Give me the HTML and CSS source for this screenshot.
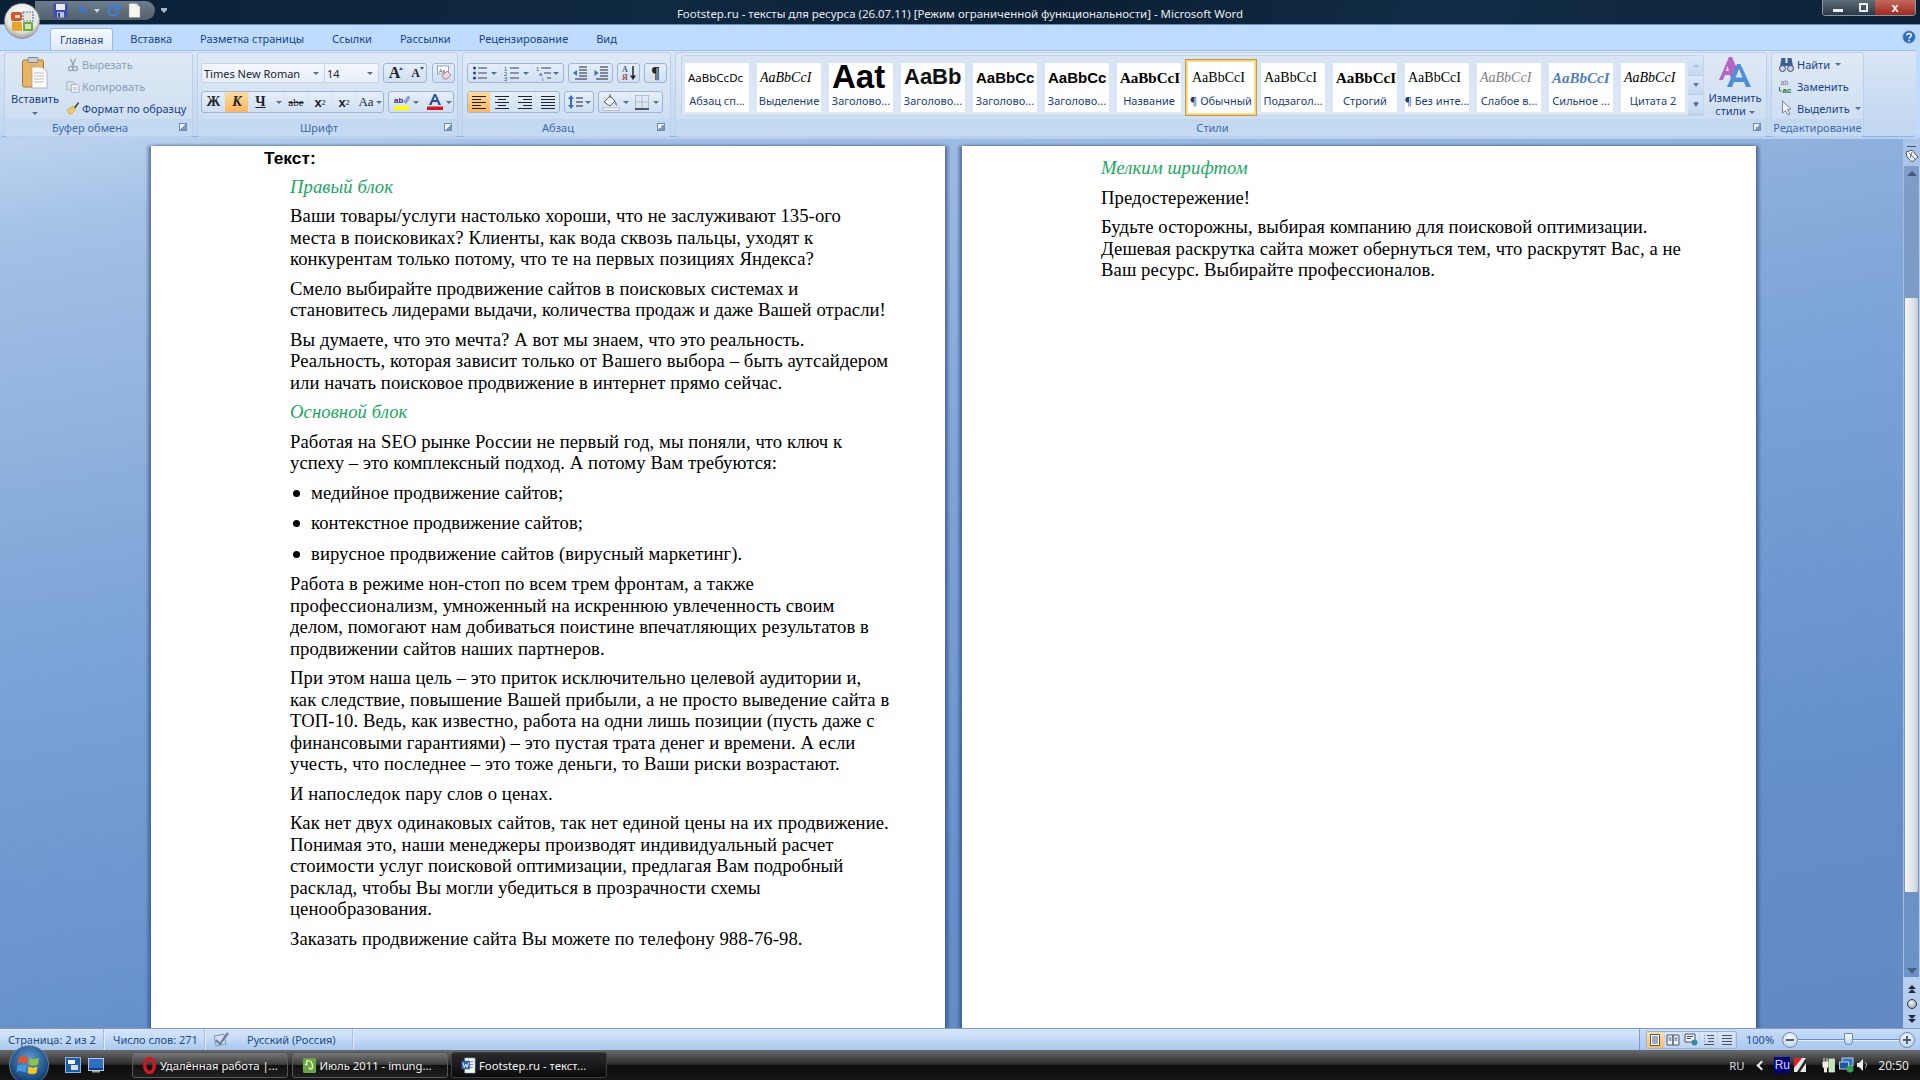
FILE: index.html
```html
<!DOCTYPE html>
<html lang="ru">
<head>
<meta charset="utf-8">
<title>Footstep.ru - Microsoft Word</title>
<link rel="stylesheet" href="styles.css">
</head>
<body>
<div class="app">
  <header class="titlebar">
    <div class="tb-left">
      <div class="qat">
        <svg class="q-ic" viewBox="0 0 15 15"><rect x="0.5" y="0.5" width="14" height="14" rx="1" fill="#3d4cb0"/><rect x="3" y="1" width="9" height="6" fill="#e8ecf8"/><rect x="4" y="9" width="7" height="5.5" fill="#b8c0dc"/><rect x="5" y="10" width="2" height="4" fill="#34408f"/></svg>
        <svg class="q-ic q-undo" viewBox="0 0 15 15"><path d="M2 6 L7 2 V5 C12 5 14 8 12 12 C11.5 9 9.500 8 7 8 V10.500 Z" fill="#3f73c8"/></svg>
        <span class="q-drop"></span>
        <svg class="q-ic q-redo" viewBox="0 0 15 15"><path d="M11 3 A6 6 0 1 0 13 8 L10.500 8 A3.500 3.500 0 1 1 9 5 L7.500 7 L14 7 L13.500 1 Z" fill="#3f7fd0"/></svg>
        <svg class="q-ic q-new" viewBox="0 0 13 15"><path d="M1 0.500 H8.500 L12 4 V14.500 H1 Z" fill="#f6f6f0" stroke="#8a8a80" stroke-width="0.500"/><path d="M8.500 0.500 V4 H12" fill="#d8d8cc"/></svg>
      </div>
      <span class="q-more"></span>
    </div>
    <div class="tb-title">Footstep.ru - тексты для ресурса (26.07.11) [Режим ограниченной функциональности] - Microsoft Word</div>
    <div class="tb-right">
      <div class="winctl">
        <span class="wc wc-min"><i></i></span>
        <span class="wc wc-max"><i></i></span>
        <span class="wc wc-close">x</span>
      </div>
    </div>
  </header>

  <div class="office-btn">
    <svg viewBox="0 0 36 36" width="36" height="36">
      <defs><radialGradient id="ob" cx="50%" cy="35%" r="65%"><stop offset="0" stop-color="#ffffff"/><stop offset="0.7" stop-color="#e4e6e2"/><stop offset="1" stop-color="#9a9c94"/></radialGradient></defs>
      <circle cx="18" cy="18" r="17.500" fill="url(#ob)" stroke="#7f8a94" stroke-width="0.600"/>
      <rect x="7" y="9" width="11" height="9" rx="2" fill="#d8562a"/>
      <rect x="19" y="9" width="10" height="9" fill="#e8e4d8" stroke="#4e7cb8" stroke-width="1.200" stroke-dasharray="2 1"/>
      <rect x="8" y="19" width="10" height="9" rx="1" fill="#e9a42a"/>
      <rect x="19" y="19" width="10" height="9" rx="1" fill="#6cab3c"/>
      <rect x="11" y="12" width="5" height="3" fill="#f6d9c6"/>
      <rect x="21" y="21" width="6" height="5" fill="#cfe6b4"/>
    </svg>
  </div>

  <nav class="tabs">
    <span class="tab tab-active">Главная</span>
    <span class="tab">Вставка</span>
    <span class="tab">Разметка страницы</span>
    <span class="tab">Ссылки</span>
    <span class="tab">Рассылки</span>
    <span class="tab">Рецензирование</span>
    <span class="tab">Вид</span>
    <svg class="help" viewBox="0 0 14 14"><circle cx="7" cy="7" r="6.500" fill="#2f6fc0" stroke="#a9c4e4"/><path d="M4.800 5.400 C5 3 9.400 3 9.300 5.500 C9.200 7 7.200 7 7.100 8.700" fill="none" stroke="#fff" stroke-width="1.500"/><circle cx="7.100" cy="10.600" r="0.900" fill="#fff"/></svg>
  </nav>

  <section class="ribbon">
    <div class="ribbon-panel">
      <!-- clipboard -->
      <div class="group g-clip">
        <div class="gbody clip-body">
          <div class="paste">
            <svg class="paste-ic" viewBox="0 0 26 32"><rect x="0.500" y="3" width="21" height="27" rx="1.500" fill="#e7b561" stroke="#a8762f"/><rect x="6" y="0.500" width="10" height="5" rx="1" fill="#c9cdd2" stroke="#7e858e"/><path d="M10 10 H20 L25 15 V31 H10 Z" fill="#fbfbf8" stroke="#9aa0a8" stroke-width="0.700"/><path d="M12 16 H22 M12 19 H22 M12 22 H22 M12 25 H22" stroke="#b8bec8"/></svg>
            <span class="paste-label">Вставить</span>
            <span class="drop drop-paste"></span>
          </div>
          <div class="smalls">
            <div class="small disabled">
              <svg class="sic" viewBox="0 0 14 16"><path d="M4 1 L8 9 M10 1 L6 9" stroke="#9aa4b0" stroke-width="1.500"/><circle cx="4.500" cy="12" r="2.500" fill="none" stroke="#9aa4b0" stroke-width="1.500"/><circle cx="9.500" cy="12" r="2.500" fill="none" stroke="#9aa4b0" stroke-width="1.500"/></svg>
              <span>Вырезать</span>
            </div>
            <div class="small disabled">
              <svg class="sic" viewBox="0 0 16 14"><path d="M1 1 H8 L10 3 V10 H1 Z" fill="#dfe6ee" stroke="#a3adb9"/><path d="M6 4 H13 L15 6 V13 H6 Z" fill="#eef2f6" stroke="#a3adb9"/><path d="M8 8 H13 M8 10 H13" stroke="#b4bdc8"/></svg>
              <span>Копировать</span>
            </div>
            <div class="small">
              <svg class="sic" viewBox="0 0 16 16"><path d="M9 7 L14 1 L15 2.500 L10.500 8.500 Z" fill="#3c3f4a"/><path d="M2 10 L8 6 L11 9.500 L6 15 C4 15 1.500 13 2 10 Z" fill="#f3cf58" stroke="#b08d2c" stroke-width="0.600"/></svg>
              <span>Формат по образцу</span>
            </div>
          </div>
        </div>
        <div class="glabel has-launch">Буфер обмена<span class="launch"></span></div>
      </div>

      <!-- font -->
      <div class="group g-font">
        <div class="gbody rows">
          <div class="row">
            <div class="combo combo-font"><span>Times New Roman</span><span class="drop"></span></div>
            <div class="combo combo-size"><span>14</span><span class="drop"></span></div>
            <div class="box box-grow">
              <span class="cell c22 grow-a grow-big">A<em class="tri-up"></em></span>
              <span class="cell c22 grow-a grow-small">A<em class="tri-down"></em></span>
            </div>
            <div class="box box-clear">
              <svg class="ic16" viewBox="0 0 16 16"><rect x="1.500" y="1" width="11" height="8" fill="#fff" stroke="#6d7f99" stroke-width="0.700"/><text x="3" y="7.500" class="tiny">Aa</text><path d="M6 11 L11 6 L15 10 L11 14 H8 Z" fill="#f3d0d8" stroke="#8b6f7a" stroke-width="0.700"/></svg>
            </div>
          </div>
          <div class="row">
            <div class="box box-fmt">
              <span class="cell w23 fmt-b">Ж</span>
              <span class="cell w24 fmt-i active">К</span>
              <span class="cell w23 fmt-u">Ч</span>
              <span class="cell w12"><span class="drop"></span></span>
              <span class="cell w24 fmt-s">abe</span>
              <span class="cell w24 fmt-x">x<sub>2</sub></span>
              <span class="cell w24 fmt-x">x<sup>2</sup></span>
              <span class="cell w28 fmt-aa">Aa<span class="drop"></span></span>
            </div>
            <div class="box box-color">
              <span class="cell w34">
                <svg class="ic18" viewBox="0 0 18 18"><rect x="1" y="13" width="15" height="4" fill="#ffff00"/><text x="1" y="10" class="tinyb">ab</text><path d="M11 9 L15 3 L17 4.500 L13 10.500 Z" fill="#8fa8d8" stroke="#5b6e94" stroke-width="0.500"/></svg>
                <span class="drop"></span>
              </span>
              <span class="cell w32">
                <svg class="ic18" viewBox="0 0 18 18"><path d="M3 12 L8 1 H10 L15 12 H12.500 L11.300 9 H6.700 L5.500 12 Z M7.500 7 H10.500 L9 3.300 Z" fill="#2c4f9a" fill-rule="evenodd"/><rect x="1" y="13.500" width="16" height="3.500" fill="#e0121c"/></svg>
                <span class="drop"></span>
              </span>
            </div>
          </div>
        </div>
        <div class="glabel has-launch">Шрифт<span class="launch"></span></div>
      </div>

      <!-- paragraph -->
      <div class="group g-para">
        <div class="gbody rows">
          <div class="row row-para">
            <div class="box">
              <span class="cell w32"><svg class="ic16" viewBox="0 0 16 16"><circle cx="2.500" cy="3" r="1.500" fill="#26497f"/><circle cx="2.500" cy="8" r="1.500" fill="#26497f"/><circle cx="2.500" cy="13" r="1.500" fill="#26497f"/><path d="M6 3 H15 M6 8 H15 M6 13 H15" stroke="#3c4350"/></svg><span class="drop"></span></span>
              <span class="cell w32"><svg class="ic16" viewBox="0 0 16 16"><text x="0" y="5.500" class="tinyn">1</text><text x="0" y="10.500" class="tinyn">2</text><text x="0" y="15.500" class="tinyn">3</text><path d="M6 3 H15 M6 8 H15 M6 13 H15" stroke="#3c4350"/></svg><span class="drop"></span></span>
              <span class="cell w31"><svg class="ic16" viewBox="0 0 16 16"><text x="0" y="5.500" class="tinyn">1</text><text x="3" y="10.500" class="tinyn">a</text><text x="6" y="15.500" class="tinyn">i</text><path d="M5 3 H15 M8 8 H15 M11 13 H15" stroke="#3c4350"/></svg><span class="drop drop-tight"></span></span>
            </div>
            <div class="box">
              <span class="cell w215"><svg class="ic16" viewBox="0 0 16 16"><path d="M7 2 H15 M7 5 H15 M7 8 H15 M7 11 H15 M3 14 H15" stroke="#23272f"/><path d="M1 8 L5 5 V11 Z" fill="#3a70b8"/></svg></span>
              <span class="cell w215"><svg class="ic16" viewBox="0 0 16 16"><path d="M7 2 H15 M7 5 H15 M7 8 H15 M7 11 H15 M3 14 H15" stroke="#23272f"/><path d="M5.500 8 L1.500 5 V11 Z" fill="#3a70b8"/></svg></span>
            </div>
            <div class="box box-single">
              <svg class="ic16" viewBox="0 0 16 16"><text x="1" y="7" class="sort-a">А</text><text x="1" y="15" class="sort-b">Я</text><path d="M12 1 V13" stroke="#20242c" stroke-width="1.500"/><path d="M9 10.500 L12 15 L15 10.500 Z" fill="#20242c"/></svg>
            </div>
            <div class="box box-single pil">¶</div>
          </div>
          <div class="row row-para">
            <div class="box box-align">
              <span class="cell w225 active"><svg class="ic16" viewBox="0 0 16 16"><path d="M1 2.500 H15 M1 5.500 H10 M1 8.500 H15 M1 11.500 H10 M1 14.500 H15" stroke="#20242c"/></svg></span>
              <span class="cell w225"><svg class="ic16" viewBox="0 0 16 16"><path d="M1 2.500 H15 M4 5.500 H12 M1 8.500 H15 M4 11.500 H12 M1 14.500 H15" stroke="#20242c"/></svg></span>
              <span class="cell w225"><svg class="ic16" viewBox="0 0 16 16"><path d="M1 2.500 H15 M6 5.500 H15 M1 8.500 H15 M6 11.500 H15 M1 14.500 H15" stroke="#20242c"/></svg></span>
              <span class="cell w225"><svg class="ic16" viewBox="0 0 16 16"><path d="M1 2.500 H15 M1 5.500 H15 M1 8.500 H15 M1 11.500 H15 M1 14.500 H15" stroke="#20242c"/></svg></span>
            </div>
            <div class="box">
              <span class="cell w28"><svg class="ic16" viewBox="0 0 16 16"><path d="M3 1 L6 5 H4 V11 H6 L3 15 L0 11 H2 V5 H0 Z" fill="#3a70b8"/><path d="M8 4 H15 M8 8 H15 M8 12 H15" stroke="#23272f"/></svg><span class="drop drop-tight"></span></span>
            </div>
            <div class="box">
              <span class="cell w32"><svg class="ic18" viewBox="0 0 18 18"><path d="M2 9 L8 3 L13 8 L8 13 Z" fill="#f4f4ee" stroke="#59606c"/><path d="M13 8 C15 10 15 12 14.500 13 C13.500 12 13 10 13 8 Z" fill="#3c70b6"/><path d="M8 1 V5" stroke="#59606c"/><rect x="1" y="15" width="16" height="2.500" fill="#fff" stroke="#7f8793" stroke-width="0.500"/></svg><span class="drop"></span></span>
              <span class="cell w31"><svg class="ic16" viewBox="0 0 16 16"><path d="M1.500 1.500 H14.500 V14.500 M1.500 1.500 V14.500 M8 1.500 V14.500 M1.500 8 H14.500" stroke="#8f97a4" stroke-dasharray="1 1" fill="none"/><path d="M1 15 H15" stroke="#23272f" stroke-width="1.500"/></svg><span class="drop"></span></span>
            </div>
          </div>
        </div>
        <div class="glabel has-launch">Абзац<span class="launch"></span></div>
      </div>

      <!-- styles -->
      <div class="group g-styles">
        <div class="gbody styles-body">
          <div class="gallery">
            <div class="sitem"><span class="sample s-cal">AaBbCcDc</span><span class="sname">Абзац сп...</span></div>
            <div class="sitem"><span class="sample s-em">AaBbCcI</span><span class="sname">Выделение</span></div>
            <div class="sitem"><span class="sample s-h1">Aat</span><span class="sname">Заголово...</span></div>
            <div class="sitem"><span class="sample s-h2">AaBb</span><span class="sname">Заголово...</span></div>
            <div class="sitem"><span class="sample s-h3">AaBbCc</span><span class="sname">Заголово...</span></div>
            <div class="sitem"><span class="sample s-h4">AaBbCc</span><span class="sname">Заголово...</span></div>
            <div class="sitem"><span class="sample s-tt">AaBbCcI</span><span class="sname">Название</span></div>
            <div class="sitem selected"><span class="sample s-tm">AaBbCcI</span><span class="sname">¶ Обычный</span></div>
            <div class="sitem"><span class="sample s-tm">AaBbCcI</span><span class="sname">Подзагол...</span></div>
            <div class="sitem"><span class="sample s-strong">AaBbCcI</span><span class="sname">Строгий</span></div>
            <div class="sitem"><span class="sample s-tm">AaBbCcI</span><span class="sname">¶ Без инте...</span></div>
            <div class="sitem"><span class="sample s-weak">AaBbCcI</span><span class="sname">Слабое в...</span></div>
            <div class="sitem"><span class="sample s-strongem">AaBbCcI</span><span class="sname">Сильное ...</span></div>
            <div class="sitem"><span class="sample s-em">AaBbCcI</span><span class="sname">Цитата 2</span></div>
            <div class="gscroll">
              <span class="gs gs-up"><i></i></span>
              <span class="gs gs-down"><i></i></span>
              <span class="gs gs-more"><i></i></span>
            </div>
          </div>
          <div class="change">
            <svg class="change-ic" viewBox="0 0 34 32"><path d="M1 24 L11 1 H14 L20 15 L16 24 H13.500 L11.700 19 H7 L5 24 Z M8 15 H11 L9.500 10 Z" fill="#b565c4" fill-rule="evenodd"/><path d="M9 31 L19 8 H22.500 L33 31 H28 L26 26 H16 L14 31 Z M17.500 21.500 H24.500 L21 13 Z" fill="#4f8fd8" fill-rule="evenodd"/></svg>
            <span class="change-t">Изменить</span>
            <span class="change-t">стили <span class="drop"></span></span>
          </div>
        </div>
        <div class="glabel has-launch">Стили<span class="launch"></span></div>
      </div>

      <!-- editing -->
      <div class="group g-edit">
        <div class="gbody">
          <div class="smalls edit-smalls">
            <div class="small">
              <svg class="eic" viewBox="0 0 16 16"><path d="M3 2 H7 V7 H9 V2 H13 L15 13 H9.500 V10 H6.500 V13 H1 Z" fill="#3d5f94"/><circle cx="4" cy="12.500" r="3" fill="#c9d6ea" stroke="#2d4a78"/><circle cx="12" cy="12.500" r="3" fill="#c9d6ea" stroke="#2d4a78"/></svg>
              <span>Найти</span><span class="drop"></span>
            </div>
            <div class="small">
              <svg class="eic" viewBox="0 0 16 16"><text x="2" y="7" class="rep-a">ab</text><text x="4" y="15" class="rep-b">ac</text><path d="M1 9 V13 H3" stroke="#2a62b0" fill="none"/></svg>
              <span>Заменить</span>
            </div>
            <div class="small">
              <svg class="eic" viewBox="0 0 16 16"><path d="M4 1 L4 13 L7 10.500 L9.500 15 L11.500 14 L9 9.500 L12.500 9 Z" fill="#f6f8fc" stroke="#586a86" stroke-width="0.800"/></svg>
              <span>Выделить</span><span class="drop"></span>
            </div>
          </div>
        </div>
        <div class="glabel">Редактирование</div>
      </div>
    </div>
  </section>

  <main class="doc">
    <div class="pages">
      <article class="page page-left">
        <p class="heading">Текст:</p>
        <div class="content">
          <p class="green">Правый блок</p>
          <p>Ваши товары/услуги настолько хороши, что не заслуживают 135-ого<br>места в поисковиках? Клиенты, как вода сквозь пальцы, уходят к<br>конкурентам только потому, что те на первых позициях Яндекса?</p>
          <p>Смело выбирайте продвижение сайтов в поисковых системах и<br>становитесь лидерами выдачи, количества продаж и даже Вашей отрасли!</p>
          <p>Вы думаете, что это мечта? А вот мы знаем, что это реальность.<br>Реальность, которая зависит только от Вашего выбора – быть аутсайдером<br>или начать поисковое продвижение в интернет прямо сейчас.</p>
          <p class="green">Основной блок</p>
          <p>Работая на SEO рынке России не первый год, мы поняли, что ключ к<br>успеху – это комплексный подход. А потому Вам требуются:</p>
          <ul>
            <li>медийное продвижение сайтов;</li>
            <li>контекстное продвижение сайтов;</li>
            <li>вирусное продвижение сайтов (вирусный маркетинг).</li>
          </ul>
          <p>Работа в режиме нон-стоп по всем трем фронтам, а также<br>профессионализм, умноженный на искреннюю увлеченность своим<br>делом, помогают нам добиваться поистине впечатляющих результатов в<br>продвижении сайтов наших партнеров.</p>
          <p>При этом наша цель – это приток исключительно целевой аудитории и,<br>как следствие, повышение Вашей прибыли, а не просто выведение сайта в<br>ТОП-10. Ведь, как известно, работа на одни лишь позиции (пусть даже с<br>финансовыми гарантиями) – это пустая трата денег и времени. А если<br>учесть, что последнее – это тоже деньги, то Ваши риски возрастают.</p>
          <p>И напоследок пару слов о ценах.</p>
          <p>Как нет двух одинаковых сайтов, так нет единой цены на их продвижение.<br>Понимая это, наши менеджеры производят индивидуальный расчет<br>стоимости услуг поисковой оптимизации, предлагая Вам подробный<br>расклад, чтобы Вы могли убедиться в прозрачности схемы<br>ценообразования.</p>
          <p>Заказать продвижение сайта Вы можете по телефону 988-76-98.</p>
        </div>
      </article>
      <article class="page page-right">
        <div class="content">
          <p class="green">Мелким шрифтом</p>
          <p>Предостережение!</p>
          <p>Будьте осторожны, выбирая компанию для поисковой оптимизации.<br>Дешевая раскрутка сайта может обернуться тем, что раскрутят Вас, а не<br>Ваш ресурс. Выбирайте профессионалов.</p>
        </div>
      </article>
    </div>
    <aside class="vscroll">
      <div class="v-ruler">
        <span class="v-dash"></span>
        <svg class="v-rul" viewBox="0 0 14 14"><path d="M1 3 L7 1 L13 8 L7 13 L2 8 Z" fill="#eef2f8" stroke="#4e5a6c"/><path d="M4 4 L10 10 M7 3 L5 9" stroke="#6b7789"/></svg>
      </div>
      <div class="v-track">
        <span class="v-arrow v-arrow-up"></span>
        <div class="v-thumb"></div>
        <span class="v-arrow v-arrow-down"></span>
      </div>
      <div class="v-browse">
        <svg class="v-b" viewBox="0 0 10 10"><path d="M5 1 L9 5 H1 Z M5 5 L9 9 H1 Z" fill="#1e2a40"/></svg>
        <span class="v-ball"></span>
        <svg class="v-b" viewBox="0 0 10 10"><path d="M1 1 H9 L5 5 Z M1 5 H9 L5 9 Z" fill="#1e2a40"/></svg>
      </div>
    </aside>
  </main>

  <footer class="status">
    <span class="st st1">Страница: 2 из 2</span>
    <span class="st st2">Число слов: 271</span>
    <span class="st st3"><svg viewBox="0 0 18 16" width="18" height="16"><path d="M2 3 H12 V13 H2 Z" fill="#d4e0f0" stroke="#8296b4" transform="rotate(-12 7 8)"/><path d="M3 8 L7 12 L15 1" fill="none" stroke="#6c7f9c" stroke-width="2.200"/></svg></span>
    <span class="st st4">Русский (Россия)</span>
    <div class="st-right">
      <div class="views">
        <span class="view active"><svg viewBox="0 0 12 12" width="12" height="12"><path d="M1.500 0.500 H10.500 V11.500 H1.500 Z" fill="#fff" stroke="#4a5568"/><path d="M3 3 H9 M3 5 H9 M3 7 H9 M3 9 H9" stroke="#4a5568"/></svg></span>
        <span class="view"><svg viewBox="0 0 14 12" width="14" height="12"><path d="M1 1 H7 V11 H1 Z M7 1 H13 V11 H7 Z" fill="#eef3fa" stroke="#4a5568"/><path d="M2.500 4 H5.500 M2.500 6 H5.500 M8.500 4 H11.500 M8.500 6 H11.500" stroke="#4a5568"/></svg></span>
        <span class="view"><svg viewBox="0 0 14 13" width="14" height="13"><path d="M1 1 H11 V9 H1 Z" fill="#eef3fa" stroke="#4a5568"/><path d="M3 3.500 H9 M3 5.500 H7" stroke="#4a5568"/><circle cx="10.500" cy="9.500" r="3" fill="#2f8f9a"/></svg></span>
        <span class="view"><svg viewBox="0 0 12 12" width="12" height="12"><path d="M4 1.500 H11 M5 4.500 H11 M5 7.500 H11 M1 10.500 H11" stroke="#4a5568"/><path d="M1 1.500 H2 M1 4.500 H2 M1 7.500 H2" stroke="#7a8698"/></svg></span>
        <span class="view"><svg viewBox="0 0 12 12" width="12" height="12"><path d="M1 1.500 H11 M1 4.500 H11 M1 7.500 H11 M1 10.500 H11" stroke="#4a5568"/></svg></span>
      </div>
      <span class="zoom-pct">100%</span>
      <span class="zbtn"><i></i></span>
      <div class="zslider"><span class="zthumb"></span></div>
      <span class="zbtn zplus"><i></i><b></b></span>
    </div>
  </footer>

  <footer class="taskbar">
    <div class="orb">
      <svg viewBox="0 0 40 40" width="40" height="40">
        <defs><radialGradient id="og" cx="50%" cy="35%" r="70%"><stop offset="0" stop-color="#5f9ed8"/><stop offset="0.7" stop-color="#1d4f86"/><stop offset="1" stop-color="#0c2744"/></radialGradient></defs>
        <circle cx="20" cy="20" r="19.500" fill="url(#og)" stroke="#8d9aa6" stroke-width="0.700"/>
        <path d="M10 12 C13 10 16 11 19 12.500 L18 19 C15 17.500 12 17 9 18.500 Z" fill="#e8542a"/>
        <path d="M21 13 C24 14.500 27 14.500 30 13 L29 19.500 C26 21 23 21 20 19.500 Z" fill="#8cc63f"/>
        <path d="M8.500 20.500 C12 19 15 19.500 17.500 21 L16.500 27.500 C13.500 26 10.500 25.500 7.500 27 Z" fill="#3d9be0"/>
        <path d="M19.500 21.500 C22.500 23 25.500 23 28.500 21.500 L27.500 28 C24.500 29.500 21.500 29.500 18.500 28 Z" fill="#f7c51c"/>
      </svg>
    </div>
    <div class="ql">
      <svg viewBox="0 0 16 16" width="16" height="16"><rect x="0.500" y="0.500" width="15" height="15" fill="#1c5ca8" stroke="#8fb4dc"/><rect x="3" y="3" width="7" height="4" fill="#fff"/><rect x="6" y="8" width="7" height="5" fill="#cfe0f4"/></svg>
      <svg viewBox="0 0 16 16" width="16" height="16"><rect x="0.500" y="1.500" width="15" height="12" fill="#2f6fc4" stroke="#b4c6dc"/><rect x="1" y="11" width="14" height="2" fill="#163f7c"/><rect x="4" y="14" width="8" height="1.500" fill="#9aa6b4"/></svg>
    </div>
    <div class="task">
      <svg class="t-ic" viewBox="0 0 14 18"><ellipse cx="7" cy="9" rx="5" ry="7.500" fill="none" stroke="#d4161c" stroke-width="3.500"/></svg>
      <span>Удалённая работа |...</span>
    </div>
    <div class="task">
      <svg class="t-ic" viewBox="0 0 16 18"><rect x="1" y="1" width="14" height="16" rx="2" fill="#69a83e"/><path d="M5 4 C9 3 12 6 11 12 C9 14 7 12 8 11 M5 4 V8 H3" fill="none" stroke="#e8f2d8" stroke-width="1.500"/></svg>
      <span>Июль 2011 - imung...</span>
    </div>
    <div class="task task-on">
      <svg class="t-ic" viewBox="0 0 16 18"><path d="M4 1 H15 V17 H4 Z" fill="#f2f5fa" stroke="#8ea4c0" stroke-width="0.600"/><path d="M7 5 H13 M7 8 H13 M7 11 H13" stroke="#6e8cb8"/><rect x="0.500" y="4" width="9" height="9" fill="#2d62b0"/><path d="M2 6 L3.500 11 L5 7.500 L6.500 11 L8 6" fill="none" stroke="#fff"/></svg>
      <span>Footstep.ru - текст...</span>
    </div>
    <div class="tray">
      <span class="tr-lang">RU</span>
      <span class="tr-chev"></span>
      <span class="tr-ru">Ru</span>
      <svg class="tr-kav" viewBox="0 0 14 16"><path d="M1 1 H13 V15 H1 Z" fill="#e8e8e8"/><path d="M1 1 H9 L1 11 Z" fill="#e0202c"/><path d="M13 1 L4 15 H7 L13 6 Z" fill="#22262c"/></svg>
      <svg class="tr-pow" viewBox="0 0 14 16"><path d="M2 5 H7 V10 L5.500 11 V15 H3.500 V11 L2 10 Z M3 1 V5 M6 1 V5" fill="#f4efdc" stroke="#f4efdc"/><rect x="8" y="2" width="5.500" height="13" fill="#bfe9b4" stroke="#e8f0e8" stroke-width="0.700"/></svg>
      <svg class="tr-net" viewBox="0 0 15 16"><rect x="3" y="1" width="11" height="8" fill="#2f74c8" stroke="#dfe8f4" stroke-width="0.800"/><rect x="0.500" y="5" width="9" height="7" fill="#1c56a6" stroke="#dfe8f4" stroke-width="0.800"/><circle cx="11" cy="12" r="3.500" fill="#37a14a"/></svg>
      <svg class="tr-snd" viewBox="0 0 12 14"><path d="M1 5 H3 L7 1 V13 L3 9 H1 Z" fill="#eef0f2"/><path d="M9 4 C11 6 11 8 9 10" fill="none" stroke="#c9ccd0"/></svg>
      <span class="tr-time">20:50</span>
    </div>
  </footer>
</div>
</body>
</html>
```

FILE: styles.css
```css
* { box-sizing: border-box; }
html, body { margin: 0; padding: 0; height: 100%; overflow: hidden; }
body { font-family: "Noto Sans", "Liberation Sans", sans-serif; font-size: 11px; color: #15428b; }
.app { position: relative; width: 1920px; height: 1080px; display: flex; flex-direction: column; overflow: hidden; background: #bfdbff; }

/* title bar */
.titlebar { height: 25px; display: grid; grid-template-columns: 1fr auto 1fr; background: linear-gradient(100deg, #0b2136 0%, #0f2941 35%, #0a1f33 55%, #112c45 75%, #0d2238 100%); border-bottom: 1px solid #6f93b5; flex: none; }
.tb-left { display: flex; align-items: flex-start; padding: 1px 0 0 35px; }
.qat { width: 120px; height: 19px; border-radius: 0 10px 10px 0; background: linear-gradient(#6f7c8b, #525f6d); display: flex; align-items: center; padding-left: 18px; }
.q-ic { width: 15px; height: 15px; flex: none; }
.q-undo { margin-left: 7px; }
.q-drop { width: 0; height: 0; margin-left: 4px; border: 3px solid transparent; border-top: 4px solid #c7d6e8; border-bottom: 0; }
.q-redo { margin-left: 6px; }
.q-new { margin-left: 7px; width: 13px; }
.q-more { width: 6px; height: 5px; margin: 7px 0 0 6px; clip-path: polygon(0 0, 100% 0, 100% 40%, 50% 100%, 0 40%); background-color: #a8b4c2; }
.tb-title { color: #e8edf2; font-size: 11.45px; line-height: 27px; white-space: nowrap; }
.tb-right { display: flex; justify-content: flex-end; padding-right: 4px; }
.winctl { display: flex; height: 16px; border: 1px solid #8a97a4; border-top: 0; border-radius: 0 0 4px 4px; overflow: hidden; }
.wc { display: flex; align-items: center; justify-content: center; height: 100%; }
.wc-min { width: 29px; background: linear-gradient(#5e6b78, #2c3a48); }
.wc-min i { width: 10px; height: 3px; margin-top: 5px; background: #eef1f4; }
.wc-max { width: 23px; background: linear-gradient(#5e6b78, #2c3a48); }
.wc-max i { width: 9px; height: 9px; border: 2px solid #eef1f4; }
.wc-close { width: 40px; background: linear-gradient(#c4695c, #a0281c); color: #f4f4f4; font: bold 13px/14px "Liberation Sans", sans-serif; }

.office-btn { position: absolute; left: 4px; top: 3px; width: 36px; height: 36px; z-index: 5; }

/* tabs */
.tabs { height: 25px; flex: none; display: flex; align-items: flex-end; padding-left: 50px; gap: 6px; background: #bfdbff; position: relative; }
.tab { height: 22px; line-height: 22px; padding: 0 11px; white-space: nowrap; color: #15428b; font-size: 11px; }
.tab-active { background: linear-gradient(#f6fafe, #dfeaf8); border: 1px solid #9bbbe3; border-bottom: 0; border-radius: 3px 3px 0 0; padding: 0 9px; }
.help { width: 14px; height: 14px; position: absolute; right: 4px; top: 5px; }

/* ribbon */
.ribbon { height: 89px; flex: none; background: linear-gradient(#bfdbff 92%, #b5cfee); padding-right: 4px; }
.ribbon-panel { height: 87px; display: flex; gap: 4px; padding: 1px 0 0 4px; width: 1916px; background: linear-gradient(#d9e6f5, #c9dcf2 60%, #c1d7f0); border-top: 1px solid #9ebfe6; border-bottom: 1px solid #8db2e3; border-radius: 0 0 3px 3px; }
.group { display: flex; flex-direction: column; height: 85px; border: 1px solid #bcd0e9; border-radius: 3px; background: linear-gradient(#dfe9f5, #cfdff1 80%); flex: none; overflow: hidden; }
.g-clip { width: 189px; } .g-font { width: 261px; } .g-para { width: 209px; } .g-styles { width: 1092px; } .g-edit { width: 93px; }
.gbody { flex: 1; min-height: 0; }
.glabel { height: 17px; flex: none; text-align: center; line-height: 17px; background: linear-gradient(#c2d8f1, #c6dbf3); color: #3e6aaa; font-size: 11px; position: relative; white-space: nowrap; }
.has-launch { padding-right: 17px; }
.launch { position: absolute; right: 5px; top: 4px; width: 8px; height: 8px; border: 1px solid #6c8bb4; background: linear-gradient(135deg, #f1f5fb 50%, #7d99c0 50%); }
.drop { display: inline-block; width: 0; height: 0; border: 3px solid transparent; border-top: 3px solid #56708f; border-bottom: 0; flex: none; margin-left: auto; vertical-align: middle; }

.clip-body { display: flex; padding: 1px 0 0 3px; }
.paste { width: 54px; flex: none; display: flex; flex-direction: column; align-items: center; }
.paste-ic { width: 26px; height: 32px; margin-top: 3px; flex: none; }
.paste-label { margin-top: 2px; line-height: 16px; color: #15428b; }
.drop-paste { margin: 5px 0 0; }
.smalls { display: flex; flex-direction: column; padding: 0 0 0 4px; }
.small { height: 22px; display: flex; align-items: center; white-space: nowrap; color: #15428b; }
.small.disabled { color: #8d9fb6; }
.sic { width: 14px; height: 14px; margin-right: 2px; flex: none; }

.rows { padding: 10px 0 0 3px; display: flex; flex-direction: column; gap: 8px; }
.row { display: flex; gap: 4px; height: 20px; flex: none; }
.row + .row { height: 22px; }
.combo { height: 20px; background: linear-gradient(#f3f7fc, #e7eff8); border: 1px solid #c4d5ea; display: flex; align-items: center; padding: 0 5px 0 2px; color: #1e2530; font-size: 11px; white-space: nowrap; }
.combo-font { width: 124px; border-radius: 2px 0 0 2px; }
.combo-size { width: 54px; margin-left: -4px; border-left: 0; border-radius: 0 2px 2px 0; padding-left: 2px; }
.box { display: flex; height: 100%; border: 1px solid #9cb7d8; border-radius: 3px; background: linear-gradient(#e6eff9, #cfdff2); overflow: hidden; flex: none; }
.box-grow { width: 44px; }
.box-clear { width: 23px; align-items: center; justify-content: center; margin-left: 1px; }
.box-fmt { width: 183px; }
.box-color { width: 66px; }
.cell { display: flex; align-items: center; justify-content: center; height: 100%; flex: none; color: #20242c; position: relative; }
.cell + .cell { box-shadow: -1px 0 0 #d8e4f3; }
.cell.active { background: linear-gradient(#ffdca0, #fdb55c); }
.cell .drop { margin: 0 0 0 2px; }
.c22 { width: 21px; }
.w12 { width: 12px; } .w215 { width: 21.500px; } .w225 { width: 22.750px; } .w23 { width: 23px; } .w24 { width: 24px; } .w28 { width: 28px; } .w31 { width: 31px; } .w32 { width: 32px; } .w34 { width: 34px; }
.cell.w12 { box-shadow: none; }
.fmt-b, .fmt-i, .fmt-u { font: bold 14px "Liberation Serif", serif; }
.fmt-i { font-style: italic; }
.fmt-u { text-decoration: underline; }
.fmt-s { font: 11px "Liberation Serif", serif; text-decoration: line-through; }
.fmt-x { font: bold 13px "Liberation Sans", sans-serif; }
.fmt-x sub, .fmt-x sup { font-size: 7px; font-weight: normal; }
.fmt-aa { font: 13px "Liberation Serif", serif; }
.grow-a { font-family: "Liberation Serif", serif; font-weight: bold; }
.grow-big { font-size: 16px; }
.grow-small { font-size: 12px; }
.tri-up, .tri-down { position: absolute; right: 2px; top: 3px; width: 0; height: 0; border: 2px solid transparent; }
.tri-up { border-bottom: 3px solid #3a5a8c; border-top: 0; }
.tri-down { border-top: 3px solid #3a5a8c; border-bottom: 0; }
.ic16 { width: 16px; height: 16px; flex: none; }
.ic18 { width: 18px; height: 18px; flex: none; }
.tiny { font: 5px "Liberation Sans", sans-serif; fill: #39465c; }
.tinyb { font: bold 8px "Liberation Sans", sans-serif; fill: #3a2a80; }
.tinyn { font: 5.500px "Liberation Sans", sans-serif; fill: #26497f; }
.sort-a { font: bold 8px "Liberation Serif", serif; fill: #3a5a94; }
.sort-b { font: bold 8px "Liberation Serif", serif; fill: #a84848; }
.rep-a { font: 7px "Liberation Sans", sans-serif; fill: #6f7b8d; }
.rep-b { font: bold 8px "Liberation Sans", sans-serif; fill: #217a3c; }
.row-para { gap: 4px; padding-left: 1px; }
.row-para .cell .drop { margin-left: 3px; }
.row-para .cell .drop-tight { margin-left: 1px; }
.box-single { width: 23px; align-items: center; justify-content: center; }
.pil { font: bold 16px "Liberation Serif", serif; color: #20242c; }
.box-align { width: 93px; }

/* styles gallery */
.styles-body { display: flex; padding: 2px 0 0 5px; }
.gallery { width: 1023px; height: 61px; flex: none; display: flex; gap: 8px; padding: 7px 0 0 3px; background: linear-gradient(#d6e4f4, #dbe8f6); border: 1px solid #c3d6ed; border-radius: 2px; position: relative; }
.sitem { width: 64px; height: 49px; flex: none; background: #fff; display: flex; flex-direction: column; align-items: center; overflow: hidden; }
.sitem.selected { overflow: visible; box-shadow: 0 0 0 1px #fff, 0 0 0 2px #ffe08a, 0 0 0 3px #ffcf6a, 0 0 0 4px #c29a58; }
.sample { height: 30px; width: 100%; line-height: 30px; white-space: nowrap; overflow: hidden; text-align: left; padding-left: 3px; color: #000; flex: none; }
.sname { font-size: 11px; line-height: 16px; color: #1a3f76; white-space: nowrap; }
.s-cal { font: 11.500px/30px "Noto Sans", sans-serif; }
.s-em { font: italic 14px/30px "Liberation Serif", serif; }
.s-h1 { font: bold 33px/28px "Liberation Sans", sans-serif; padding-left: 3px; }
.s-h2 { font: bold 22px/28px "Liberation Sans", sans-serif; padding-left: 3px; color: #111; }
.s-h3 { font: bold 15px/30px "Liberation Sans", sans-serif; }
.s-h4 { font: bold 15px/30px "Liberation Sans", sans-serif; }
.s-tt { font: bold 15px/30px "Liberation Serif", serif; }
.s-tm { font: 14px/30px "Liberation Serif", serif; }
.s-strong { font: bold 15px/30px "Liberation Serif", serif; }
.s-weak { font: italic 14px/30px "Liberation Serif", serif; color: #808080; }
.s-strongem { font: italic bold 15px/30px "Liberation Serif", serif; color: #4f81bd; }
.gscroll { position: absolute; right: 0; top: 0; width: 15px; height: 59px; display: flex; flex-direction: column; }
.gs { flex: 1; display: flex; align-items: center; justify-content: center; background: linear-gradient(#dae7f6, #c6d9f0); border-bottom: 1px solid #b6cce6; }
.gs i { width: 0; height: 0; border: 3px solid transparent; }
.gs-up i { border-bottom: 4px solid #b4c4d8; border-top: 0; }
.gs-down i { border-top: 4px solid #5f7899; border-bottom: 0; }
.gs-more i { border-top: 4px solid #5f7899; border-bottom: 0; box-shadow: 0 -2px 0 -1px #5f7899; }
.change { width: 60px; flex: none; display: flex; flex-direction: column; align-items: center; margin-left: 1px; }
.change-ic { width: 34px; height: 32px; margin-top: 1px; flex: none; }
.change-t { line-height: 13px; color: #15428b; white-space: nowrap; }
.change-ic + .change-t { margin-top: 3px; }
.change-t .drop { margin: 0; }
.edit-smalls { padding: 0 0 0 6px; }
.eic { width: 17px; height: 16px; margin-right: 2px; flex: none; }
.edit-smalls .drop { margin-left: 5px; }

/* document */
.doc { height: 889px; flex: none; display: flex; background: linear-gradient(170deg, #bdd4f0 0, #a4c1e6 8%, #7ea5d8 40%, #6690cb 75%, #6289c2 100%); }
.pages { width: 1903px; flex: none; display: flex; gap: 17px; padding: 7px 0 0 151px; overflow: hidden; }
.page { width: 794px; height: 900px; flex: none; background: #fff; box-shadow: -3px 0 3px rgba(38, 62, 110, .55), 3px 0 3px rgba(38, 62, 110, .55); font: 18.67px/21.5px "Liberation Serif", serif; letter-spacing: .08px; color: #000; }
.page-left { padding: 2px 0 0 113px; }
.page-right { padding: 11px 0 0 139px; }
.page-left .content { padding-left: 26px; }
.page p { margin: 0 0 8px; white-space: nowrap; }
.page .heading { font: bold 17.330px/21.500px "Liberation Sans", sans-serif; letter-spacing: 0; margin-bottom: 6px; }
.green { font-style: italic; color: #18a860; }
.page ul { margin: 1px 0 8px; padding-left: 21px; list-style: none; }
.page li { margin-bottom: 9px; }
.page li::before { content: ""; display: inline-block; width: 7px; height: 7px; border-radius: 50%; background: #000; margin: 0 11px 2px -18px; vertical-align: middle; }

/* vertical scrollbar */
.vscroll { width: 17px; flex: none; display: flex; flex-direction: column; background: #b6cff0; }
.v-ruler { height: 27px; flex: none; display: flex; flex-direction: column; align-items: center; background: linear-gradient(#a7c3e6, #a9c6ea); padding-top: 7px; }
.v-dash { width: 9px; height: 1px; background: #3c5274; flex: none; }
.v-rul { width: 14px; height: 14px; margin-top: 2px; flex: none; }
.v-track { height: 811px; flex: none; margin: 0 1px 0 0; background: linear-gradient(#7f9dc6, #7495c4 50%, #6b92c6); display: flex; flex-direction: column; align-items: center; border-left: 1px solid #a6bedd; }
.v-arrow { width: 0; height: 0; border: 5px solid transparent; flex: none; }
.v-arrow-up { border-bottom: 5px solid #46597a; border-top: 0; margin-top: 5px; }
.v-arrow-down { border-top: 6px solid #46608a; border-bottom: 0; margin-top: 75px; }
.v-thumb { width: 15px; height: 596px; margin-top: 121px; flex: none; background: linear-gradient(90deg, #f6f7fa, #e3e6ec 50%, #c6cdd9); border: 1px solid #8497b0; border-radius: 2px; }
.v-browse { flex: 1; display: flex; flex-direction: column; align-items: center; justify-content: space-around; padding: 4px 0 2px; }
.v-b { width: 10px; height: 10px; }
.v-ball { width: 10px; height: 10px; border-radius: 50%; background: radial-gradient(circle at 40% 35%, #f4f4f6, #8f93a0); border: 1px solid #2b3346; }

/* status bar */
.status { height: 22px; flex: none; display: flex; align-items: stretch; background: linear-gradient(#d7e6f9 0, #c5dbf6 45%, #a9c8ee 100%); border-top: 1px solid #7f9bc0; color: #204a86; font-size: 11px; line-height: 21px; white-space: nowrap; }
.st { display: flex; align-items: center; border-right: 1px solid #a4bede; box-shadow: 1px 0 0 #e2ecf8; flex: none; }
.st1 { width: 104px; padding-left: 8px; }
.st2 { width: 101px; padding-left: 9px; }
.st3 { width: 33px; padding-left: 8px; border-right: 0; box-shadow: none; }
.st4 { width: 115px; padding-left: 9px; }
.st-right { margin-left: auto; width: 281px; display: flex; align-items: center; padding-left: 6px; border-left: 1px solid #7f9bc0; background: linear-gradient(#c7dcf6, #a9c8ee); flex: none; position: relative; }
.views { display: flex; width: 91px; height: 18px; border: 1px solid #9ab5d8; border-radius: 2px; background: linear-gradient(#dbe8f8, #bdd4f2); flex: none; }
.view { flex: 1; display: flex; align-items: center; justify-content: center; border-right: 1px solid #c2d5ec; }
.view.active { background: linear-gradient(#ffe0a6, #fdbb64); }
.zoom-pct { margin-left: 9px; width: 28px; flex: none; color: #1f4a8a; }
.zbtn { width: 16px; height: 16px; margin-left: 8px; flex: none; border-radius: 50%; border: 1px solid #6e8ab0; background: radial-gradient(circle at 50% 30%, #f4f8fd, #b8cde8); position: relative; }
.zbtn i { position: absolute; left: 3px; top: 6px; width: 8px; height: 2px; background: #4a5f80; }
.zbtn b { position: absolute; left: 6px; top: 3px; width: 2px; height: 8px; background: #4a5f80; }
.zslider { width: 101px; height: 1px; margin-left: 0; background: #6f8db5; flex: none; position: relative; box-shadow: 0 1px 0 #e8f1fb; }
.zthumb { position: absolute; left: 46px; top: -6px; width: 9px; height: 12px; background: linear-gradient(#f6f9fd, #c5d6ec); border: 1px solid #6b86ac; border-radius: 1px 1px 4px 4px; }
.zplus { margin-left: 0; }

/* taskbar */
.taskbar { height: 30px; flex: none; display: flex; align-items: center; padding-left: 65px; position: relative; background: linear-gradient(#6b6b6b 0, #4a4a4a 25%, #2b2b2b 48%, #0d0d0d 50%, #151515 100%); color: #f2f2f2; font-size: 11.300px; white-space: nowrap; }
.orb { position: absolute; left: 9px; top: -5px; width: 40px; height: 40px; }
.ql { display: flex; gap: 7px; width: 67px; flex: none; }
.task { width: 156px; height: 26px; margin-right: 3.500px; flex: none; display: flex; align-items: center; gap: 3px; padding-left: 9px; border: 1px solid #55585c; border-radius: 3px; background: linear-gradient(rgba(255,255,255,.16), rgba(255,255,255,.08) 48%, rgba(255,255,255,.02) 50%, rgba(255,255,255,.05)); }
.task-on { background: linear-gradient(#2a2a2c, #0a0a0c); border-color: #3c3e42; }
.t-ic { width: 15px; height: 17px; flex: none; }
.tray { margin-left: auto; display: flex; align-items: center; padding-right: 11px; height: 100%; }
.tr-lang { color: #dcdcdc; width: 29px; }
.tr-chev { width: 7px; height: 7px; border-left: 2px solid #e8e8e8; border-bottom: 2px solid #e8e8e8; transform: rotate(45deg); flex: none; margin-right: 9px; }
.tr-ru { width: 16px; height: 16px; background: #00007c; color: #cfd8ff; font: 12px/16px "Liberation Sans", sans-serif; text-align: center; flex: none; }
.tr-kav { width: 14px; height: 16px; margin-left: 3px; flex: none; }
.tr-pow { width: 14px; height: 16px; margin-left: 14px; flex: none; }
.tr-net { width: 15px; height: 16px; margin-left: 4px; flex: none; }
.tr-snd { width: 12px; height: 14px; margin-left: 2px; flex: none; }
.tr-time { margin-left: 10px; color: #e8e8e8; font-size: 12px; }
```
